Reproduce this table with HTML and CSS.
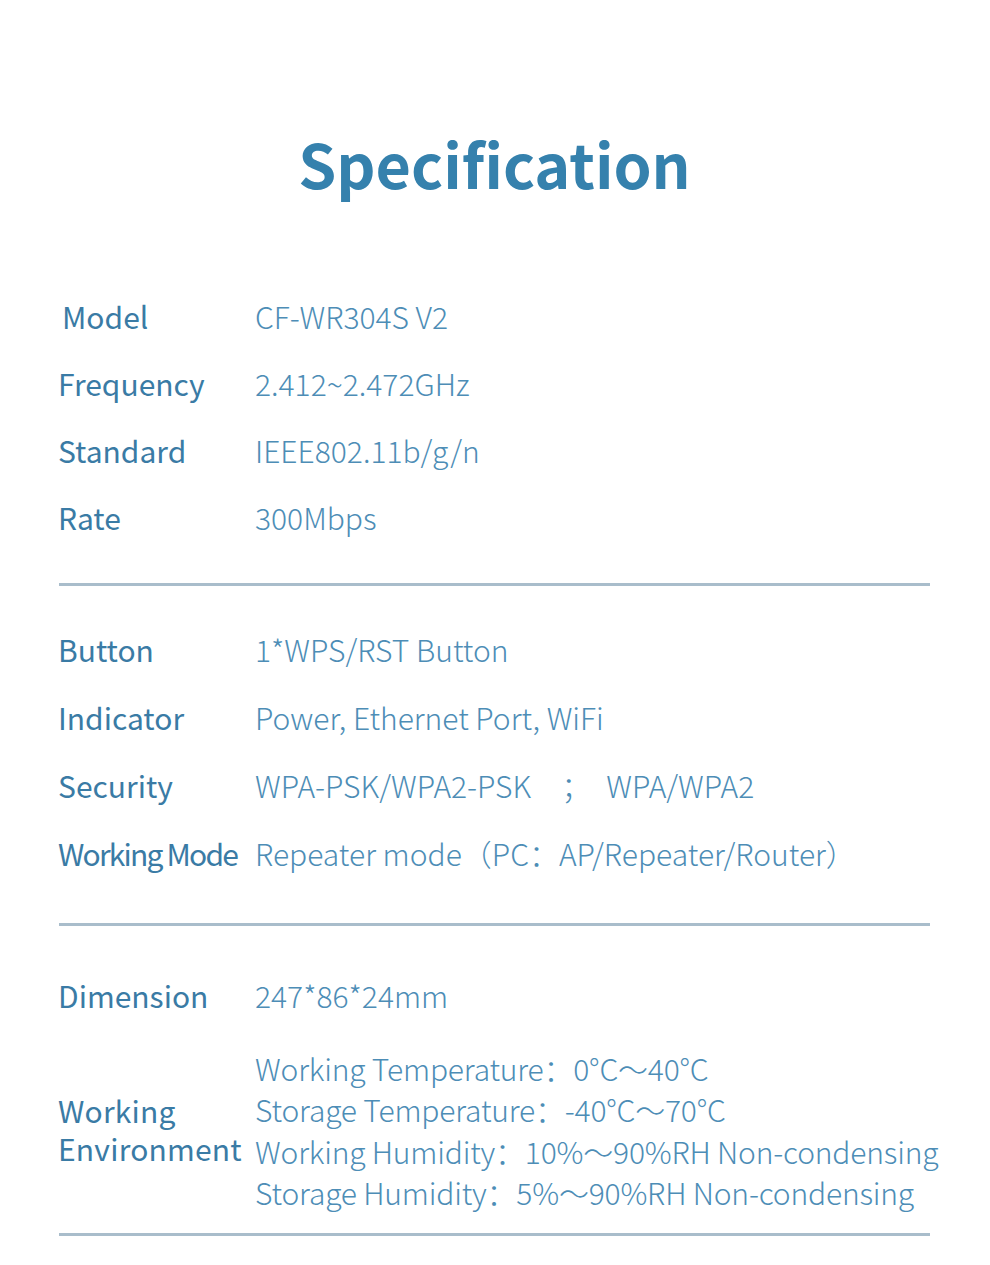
FILE: index.html
```html
<!DOCTYPE html>
<html lang="en">
<head>
    <meta charset="UTF-8">
    <meta name="viewport" content="width=device-width, initial-scale=1.0">
    <title>Specification</title>
    <link rel="stylesheet" href="styles.css">
</head>
<body>
    <div class="page">
        <h1 class="title">Specification</h1>

        <div class="group first">
            <div class="row">
                <span class="label indent">Model</span>
                <span class="value">CF-WR304S V2</span>
            </div>
            <div class="row">
                <span class="label">Frequency</span>
                <span class="value">2.412~2.472GHz</span>
            </div>
            <div class="row">
                <span class="label">Standard</span>
                <span class="value">IEEE802.11b/g/n</span>
            </div>
            <div class="row">
                <span class="label">Rate</span>
                <span class="value">300Mbps</span>
            </div>
        </div>

        <hr class="divider">

        <div class="group second">
            <div class="row">
                <span class="label">Button</span>
                <span class="value">1*WPS/RST Button</span>
            </div>
            <div class="row">
                <span class="label">Indicator</span>
                <span class="value">Power, Ethernet Port, WiFi</span>
            </div>
            <div class="row">
                <span class="label">Security</span>
                <span class="value">WPA-PSK/WPA2-PSK　；　WPA/WPA2</span>
            </div>
            <div class="row">
                <span class="label narrow">Working Mode</span>
                <span class="value">Repeater mode（PC：AP/Repeater/Router）</span>
            </div>
        </div>

        <hr class="divider">

        <div class="group third">
            <div class="row">
                <span class="label">Dimension</span>
                <span class="value">247*86*24mm</span>
            </div>
            <div class="row env">
                <div class="label env-label">
                    <div>Working</div>
                    <div>Environment</div>
                </div>
                <div class="env-list">
                    <div>Working Temperature：0°C～40°C</div>
                    <div>Storage Temperature：-40°C～70°C</div>
                    <div>Working Humidity：10%～90%RH Non-condensing</div>
                    <div>Storage Humidity：5%～90%RH Non-condensing</div>
                </div>
            </div>
        </div>

        <hr class="divider">
    </div>
</body>
</html>
```

FILE: styles.css
```css
* {
    margin: 0;
    padding: 0;
    box-sizing: border-box;
}

body {
    font-family: "Noto Sans CJK SC", "Noto Sans", sans-serif;
    background: #ffffff;
    width: 990px;
    min-height: 1265px;
}

.page {
    padding: 0 60px 0 59px;
}

.title {
    padding-top: 125px;
    text-align: center;
    color: #3581ad;
    font-size: 61px;
    font-weight: 700;
    line-height: 76px;
}

.group.first {
    margin-top: 82px;
}

.group.second {
    margin-top: 29px;
}

.group.third {
    margin-top: 36px;
}

.row {
    display: flex;
    align-items: center;
    height: 67px;
    white-space: nowrap;
}

.group.second .row {
    height: 68px;
}

.label {
    flex: 0 0 197px;
    margin-left: -1px;
    color: #3a7ba5;
    font-size: 30px;
    font-weight: 400;
    line-height: 67px;
}

.label.indent {
    padding-left: 4px;
}

.label.narrow {
    letter-spacing: -1.8px;
}

.value {
    color: #4d8db6;
    font-size: 30px;
    font-weight: 300;
    line-height: 67px;
}

.row.env {
    height: auto;
    margin-top: 19px;
}

.env-label {
    margin-top: -4px;
    line-height: 38px;
    letter-spacing: 0.2px;
}

.env-list {
    color: #4d8db6;
    font-size: 30px;
    font-weight: 300;
    line-height: 41.3px;
    letter-spacing: -0.2px;
}

.divider {
    border: none;
    height: 3px;
    background: #a9bdcb;
}

.group.first + .divider {
    margin-top: 32px;
}

.group.second + .divider {
    margin-top: 36px;
}

.group.third + .divider {
    margin-top: 20px;
}
```
